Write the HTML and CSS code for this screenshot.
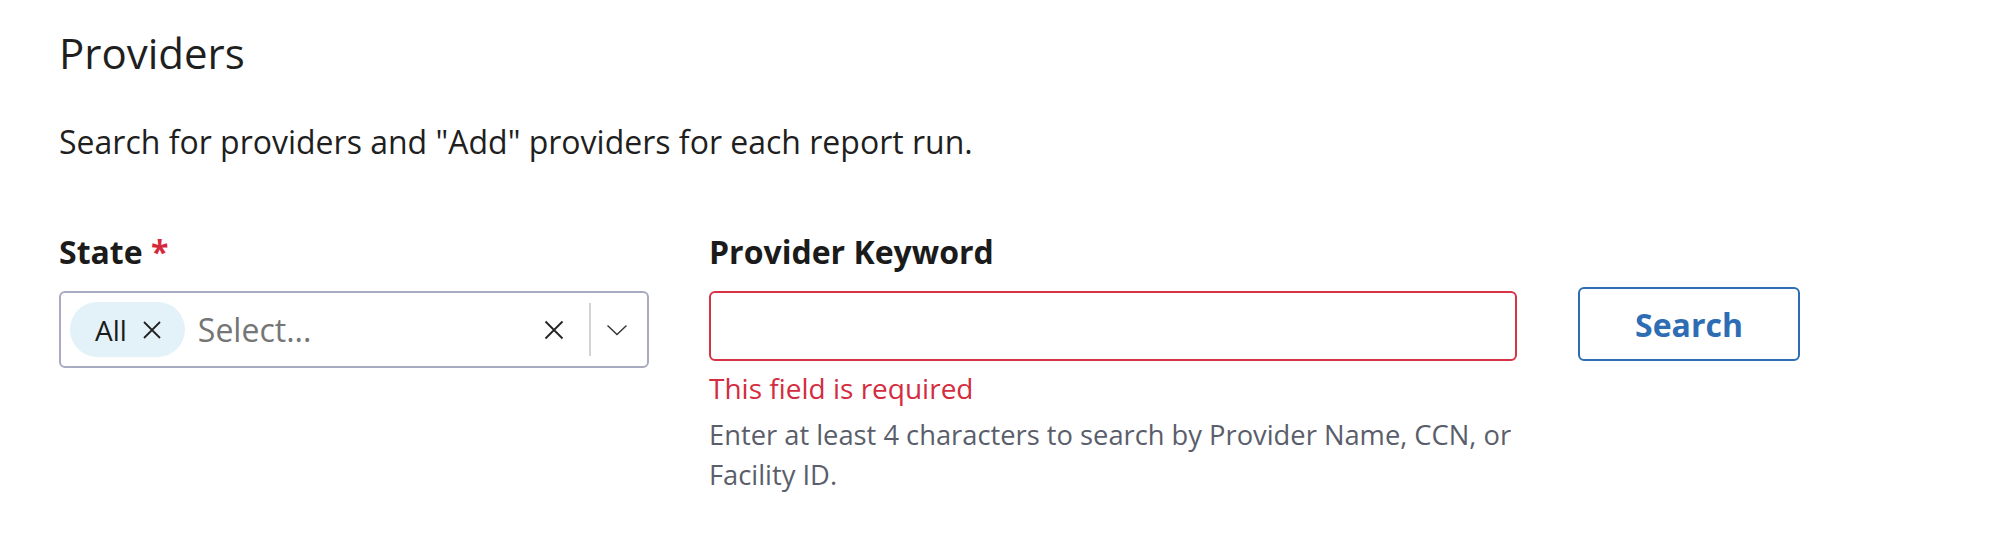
FILE: index.html
```html
<!DOCTYPE html>
<html lang="en">
<head>
<meta charset="utf-8">
<title>Providers</title>
<link rel="stylesheet" href="styles.css">
</head>
<body>
<main class="page">
  <h1 class="title">Providers</h1>
  <p class="intro">Search for providers and "Add" providers for each report run.</p>
  <div class="form-row">
    <div class="field field-state">
      <label class="label">State <span class="req">*</span></label>
      <div class="select">
        <div class="select-values">
          <span class="chip">
            <span class="chip-text">All</span>
            <svg class="chip-x" width="20" height="20" viewBox="0 0 20 20"><path d="M2 2 L18 18 M18 2 L2 18" stroke="#222" stroke-width="1.8" fill="none"/></svg>
          </span>
          <span class="placeholder">Select...</span>
        </div>
        <div class="select-ind">
          <svg class="clear-x" width="20" height="20" viewBox="0 0 20 20"><path d="M1.5 1.5 L18.5 18.5 M18.5 1.5 L1.5 18.5" stroke="#222" stroke-width="1.8" fill="none"/></svg>
          <span class="sep"></span>
          <svg class="chev" width="22" height="12" viewBox="0 0 22 12"><path d="M1.5 1.5 L11 10.5 L20.5 1.5" stroke="#333" stroke-width="1.4" fill="none"/></svg>
        </div>
      </div>
    </div>
    <div class="field field-keyword">
      <label class="label">Provider Keyword</label>
      <input class="text-input" type="text">
      <div class="error">This field is required</div>
      <div class="help">Enter at least 4 characters to search by Provider Name, CCN, or Facility ID.</div>
    </div>
    <div class="field field-btn">
      <button class="btn" type="button">Search</button>
    </div>
  </div>
</main>
</body>
</html>
```
FILE: styles.css
```css
html, body {
  margin: 0;
  padding: 0;
  background: #ffffff;
}
body {
  font-family: "Open Sans", "Noto Sans", sans-serif;
  color: #1b1b1b;
}
.page {
  padding: 28px 0 0 59px;
}
.title {
  margin: 0;
  font-size: 42px;
  line-height: 50px;
  font-weight: 400;
  color: #1f1f1f;
}
.intro {
  margin: 44px 0 0 0;
  font-size: 32px;
  line-height: 40px;
  color: #1f1f1f;
}
.form-row {
  display: flex;
  align-items: flex-start;
  margin-top: 70px;
}
.field {
  display: flex;
  flex-direction: column;
}
.field-state {
  width: 590px;
}
.field-keyword {
  width: 808px;
  margin-left: 60px;
}
.field-btn {
  margin-left: 61px;
  padding-top: 55px;
}
.label {
  font-size: 32px;
  line-height: 40px;
  font-weight: 700;
  color: #1b1b1b;
  margin-bottom: 19px;
}
.req {
  color: #d6283c;
}
.select {
  box-sizing: border-box;
  height: 77px;
  border: 2px solid #a8abbf;
  border-radius: 6px;
  display: flex;
  align-items: center;
  background: #fff;
}
.select-values {
  flex: 1;
  display: flex;
  align-items: center;
  padding-left: 9px;
}
.chip {
  display: flex;
  align-items: center;
  height: 55px;
  padding: 0 23px 0 25px;
  border-radius: 28px;
  background: #e3f1f8;
}
.chip-text {
  font-size: 28px;
  color: #1b1b1b;
}
.chip-x {
  margin-left: 15px;
}
.placeholder {
  margin-left: 13px;
  font-size: 32px;
  color: #757575;
}
.select-ind {
  display: flex;
  align-items: center;
  padding-right: 19px;
}
.clear-x {
  margin-right: 25px;
}
.sep {
  width: 2px;
  height: 53px;
  background: #d3d3d3;
  margin-right: 15px;
}
.text-input {
  box-sizing: border-box;
  height: 70px;
  width: 100%;
  margin: 0;
  border: 2px solid #d63444;
  border-radius: 6px;
  background: #fff;
  outline: none;
  font-family: inherit;
  font-size: 28px;
}
.error {
  margin-top: 9px;
  font-size: 28px;
  line-height: 36px;
  color: #d42d3f;
}
.help {
  margin-top: 9px;
  font-size: 27.3px;
  line-height: 40px;
  color: #5a5e6b;
}
.btn {
  box-sizing: border-box;
  width: 222px;
  height: 74px;
  border: 2px solid #2e6db4;
  border-radius: 6px;
  background: #fff;
  color: #2e6db4;
  font-family: inherit;
  font-size: 32px;
  font-weight: 700;
  padding: 0;
  cursor: pointer;
}
```
